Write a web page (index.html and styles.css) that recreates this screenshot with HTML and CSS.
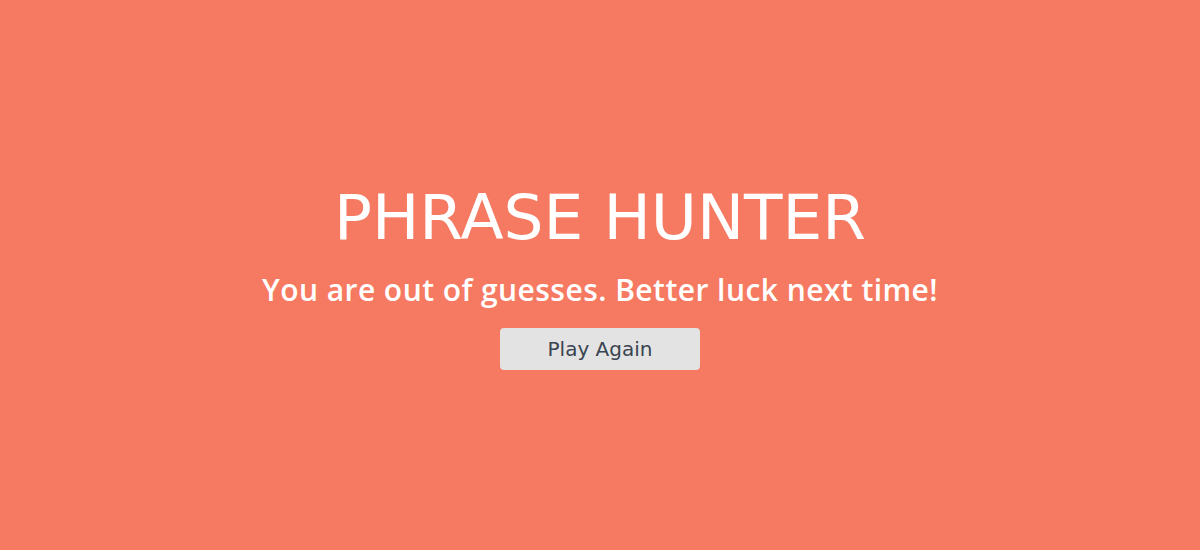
FILE: index.html
```html
<!DOCTYPE html>
<html lang="en">
<head>
<meta charset="utf-8">
<title>Phrase Hunter</title>
<link rel="stylesheet" href="styles.css">
</head>
<body>
<div class="overlay">
  <h2 class="title">PHRASE HUNTER</h2>
  <h1 class="message">You are out of guesses. Better luck next time!</h1>
  <button class="btn-reset">Play Again</button>
</div>
</body>
</html>
```
FILE: styles.css
```css
html, body {
  margin: 0;
  padding: 0;
  height: 100%;
}
body {
  background: #f67a61;
  font-family: "DejaVu Sans", "Liberation Sans", sans-serif;
}
.overlay {
  height: 550px;
  display: flex;
  flex-direction: column;
  align-items: center;
  justify-content: center;
  color: #fff;
}
.title {
  margin: 0;
  font-size: 63px;
  font-weight: 400;
  line-height: 1.2;
}
.message {
  margin: 16px 0 20px;
  font-family: "Open Sans", "DejaVu Sans", sans-serif;
  font-size: 30px;
  font-weight: 600;
  line-height: 1.2;
  letter-spacing: 0.45px;
}
.btn-reset {
  width: 200px;
  height: 42px;
  border: none;
  border-radius: 4px;
  background: #e3e3e3;
  color: #3a4450;
  font-family: inherit;
  font-size: 20px;
  padding: 0;
  cursor: pointer;
}
```
